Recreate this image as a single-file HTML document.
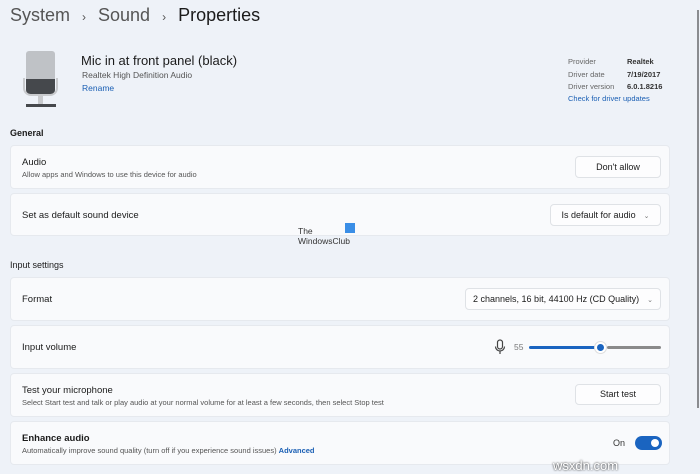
<!DOCTYPE html>
<html><head><style>
*{margin:0;padding:0;box-sizing:border-box}
body{width:700px;height:474px;overflow:hidden;background:#eef2f8;font-family:"Liberation Sans",sans-serif;color:#1b1b1b;position:relative}
.abs{position:absolute}
.card{position:absolute;left:10px;width:660px;background:#f9fafc;border-radius:4px;border:1px solid #e6e9ee}
.t{position:absolute;left:11px;font-size:9.5px;color:#1b1b1b}
.s{position:absolute;left:11px;font-size:7.5px;color:#555}
.btn{position:absolute;background:#fdfdfe;border:1px solid #dfe2e6;border-radius:4px;font-size:9px;text-align:center;color:#1b1b1b}
.sec{position:absolute;left:10px;font-size:9px;font-weight:bold;color:#1b1b1b}
.chev{display:inline-block;margin-left:8px;color:#777;font-size:7px}
</style></head><body>
<div class="abs" style="left:10px;top:5px;font-size:18px;color:#555">System <span style="font-size:12px;margin:0 7px">›</span> Sound <span style="font-size:12px;margin:0 7px">›</span> <span style="color:#1b1b1b">Properties</span></div>
<div class="abs" style="left:26px;top:51px;width:29px;height:28px;background:#bfc2c6;border-radius:3px 3px 0 0"></div>
<div class="abs" style="left:26px;top:79px;width:29px;height:15px;background:#45484c;border-radius:0 0 4px 4px"></div>
<div class="abs" style="left:23px;top:78px;width:35px;height:18px;border:2px solid #c8cacd;border-top:none;border-radius:0 0 8px 8px"></div>
<div class="abs" style="left:38px;top:96px;width:5px;height:8px;background:#c8cacd"></div>
<div class="abs" style="left:26px;top:104px;width:30px;height:3px;background:#45484c"></div>
<div class="abs" style="left:81px;top:53px;font-size:13px">Mic in at front panel (black)</div>
<div class="abs" style="left:82px;top:70px;font-size:8.5px;color:#555">Realtek High Definition Audio</div>
<div class="abs" style="left:82px;top:83px;font-size:8.5px;color:#1a5fb4">Rename</div>
<div class="abs" style="left:568px;top:56px;font-size:7.5px;color:#666;line-height:12.5px">Provider<br>Driver date<br>Driver version</div>
<div class="abs" style="left:627px;top:56px;font-size:7.5px;font-weight:bold;color:#333;line-height:12.5px">Realtek<br>7/19/2017<br>6.0.1.8216</div>
<div class="abs" style="left:568px;top:94px;font-size:7.5px;color:#1a5fb4">Check for driver updates</div>
<div class="abs" style="left:697px;top:10px;width:2px;height:398px;background:#8a8c90"></div>
<div class="sec" style="top:128px">General</div>
<div class="card" style="top:145px;height:44px"><div class="t" style="top:11px">Audio</div><div class="s" style="top:24px">Allow apps and Windows to use this device for audio</div>
<div class="btn" style="left:564px;top:10px;width:86px;height:22px;line-height:20px">Don't allow</div></div>
<div class="card" style="top:193px;height:43px"><div class="t" style="top:16px">Set as default sound device</div>
<div class="btn" style="left:539px;top:10px;width:111px;height:22px;line-height:20px">Is default for audio<span class="chev">⌄</span></div></div>
<div class="abs" style="left:298px;top:226px;font-size:8.5px;color:#333;line-height:10px">The<br>WindowsClub</div>
<div class="abs" style="left:345px;top:223px;width:10px;height:10px;background:#3a8ee6"></div>
<div class="sec" style="top:260px;font-weight:normal">Input settings</div>
<div class="card" style="top:277px;height:44px"><div class="t" style="top:16px">Format</div>
<div class="btn" style="left:454px;top:10px;width:196px;height:22px;line-height:20px">2 channels, 16 bit, 44100 Hz (CD Quality)<span class="chev">⌄</span></div></div>
<div class="card" style="top:325px;height:44px"><div class="t" style="top:16px">Input volume</div>
<svg class="abs" style="left:483px;top:13px" width="12" height="16" viewBox="0 0 12 16"><rect x="3.5" y="1" width="5" height="9" rx="2.5" fill="none" stroke="#444" stroke-width="1.2"/><path d="M1.5 7.5a4.5 4.5 0 0 0 9 0M6 12v3" fill="none" stroke="#444" stroke-width="1.2"/></svg>
<div class="abs" style="left:503px;top:16px;font-size:8.5px;color:#777">55</div>
<div class="abs" style="left:518px;top:20px;width:72px;height:3px;background:#1a64c0;border-radius:2px"></div>
<div class="abs" style="left:596px;top:20px;width:54px;height:3px;background:#8a8a8a;border-radius:2px"></div>
<div class="abs" style="left:583px;top:15px;width:13px;height:13px;border-radius:50%;background:#fff;border:1px solid #ddd"></div>
<div class="abs" style="left:586px;top:18px;width:7px;height:7px;border-radius:50%;background:#1a64c0"></div></div>
<div class="card" style="top:373px;height:44px"><div class="t" style="top:11px">Test your microphone</div><div class="s" style="top:24px">Select Start test and talk or play audio at your normal volume for at least a few seconds, then select Stop test</div>
<div class="btn" style="left:564px;top:10px;width:86px;height:21px;line-height:19px">Start test</div></div>
<div class="card" style="top:421px;height:44px"><div class="t" style="top:11px;font-weight:bold">Enhance audio</div><div class="s" style="top:24px">Automatically improve sound quality (turn off if you experience sound issues) <span style="color:#1a5fb4;font-weight:bold">Advanced</span></div>
<div class="abs" style="left:602px;top:16px;font-size:9px;color:#333">On</div>
<div class="abs" style="left:624px;top:14px;width:27px;height:14px;border-radius:7px;background:#1a64c0"></div>
<div class="abs" style="left:640px;top:17px;width:8px;height:8px;border-radius:50%;background:#fff"></div></div>
<div class="abs" style="left:553px;top:458px;font-size:13px;color:#fff;text-shadow:0 0 2px #000">wsxdn.com</div>
</body></html>
